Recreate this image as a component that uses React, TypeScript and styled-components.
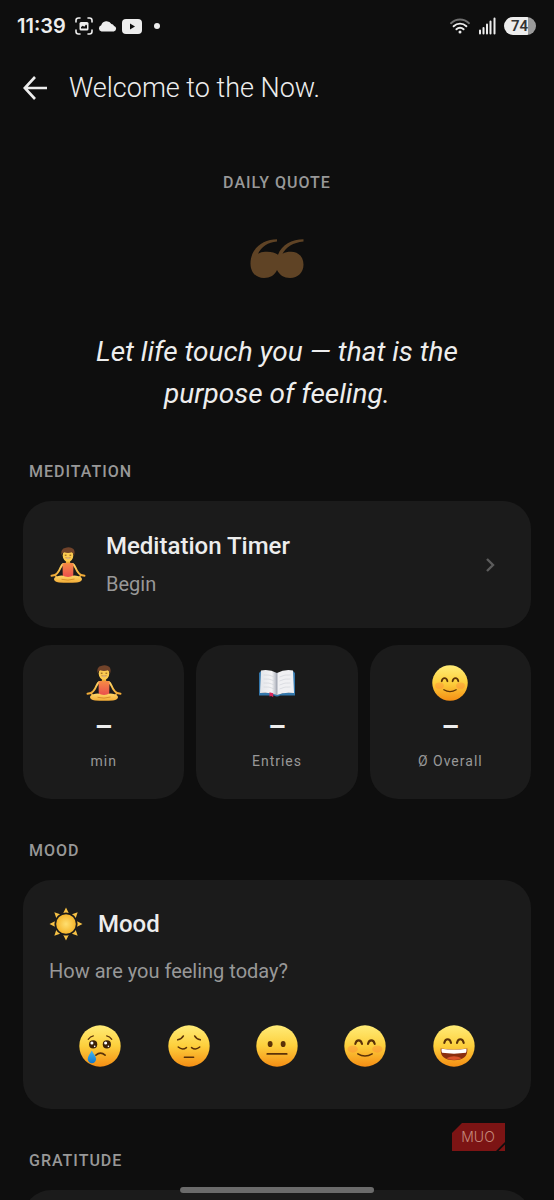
import React from "react";
import styled, { createGlobalStyle } from "styled-components";

const GlobalStyle = createGlobalStyle`
  *, *::before, *::after { box-sizing: border-box; }
  html, body { margin: 0; background: #0e0e0e; }
  body { font-family: Roboto, "Liberation Sans", sans-serif; color: #ededed; }
  h1, h2, h3, p { margin: 0; }
  button { font: inherit; color: inherit; background: none; border: 0; padding: 0; letter-spacing: inherit; cursor: pointer; }
  svg { display: block; flex: none; }
`;

const Screen = styled.div`
  position: relative;
  display: flex;
  flex-direction: column;
  height: 100vh;
  overflow: hidden;
  background: #0e0e0e;
`;

const StatusBar = styled.div`
  flex: none;
  display: flex;
  align-items: center;
  justify-content: space-between;
  height: 52px;
  padding: 0 18px 0 17px;
`;

const StatusGroup = styled.div<{ $gap: number }>`
  display: flex;
  align-items: center;
  gap: ${(p) => p.$gap}px;
`;

const Clock = styled.time`
  font: 600 20px/24px Inter, Roboto, sans-serif;
  margin-right: 4px;
`;

const Dot = styled.span`
  width: 6px;
  height: 6px;
  margin-left: 7px;
  border-radius: 50%;
  background: #ededed;
`;

const Battery = styled.span`
  display: flex;
  align-items: center;
  justify-content: center;
  width: 32px;
  height: 18px;
  padding-right: 1px;
  border-radius: 9px;
  background: linear-gradient(90deg, #ededed 76%, #9a9a9a 76%);
  color: #333;
  font: 600 15px/18px Roboto, sans-serif;
`;

const Header = styled.header`
  flex: none;
  display: flex;
  align-items: center;
  gap: 22px;
  height: 72px;
  padding: 0 23px;
`;

const Title = styled.h1`
  font-size: 27px;
  font-weight: 300;
  line-height: 36px;
`;

const Main = styled.main`
  flex: 1;
  min-height: 0;
  overflow-y: auto;
  scrollbar-width: none;
  padding: 48px 23px 0;
`;

const Label = styled.h2`
  font-size: 16px;
  font-weight: 500;
  line-height: 22px;
  letter-spacing: 1px;
  color: #989898;
`;

const Quote = styled.section`
  display: flex;
  flex-direction: column;
  align-items: center;
  text-align: center;
`;

const QuoteText = styled.p`
  margin-top: 52px;
  max-width: 400px;
  font-size: 28px;
  font-style: italic;
  line-height: 42px;
`;

const Section = styled.section<{ $top: number }>`
  display: flex;
  flex-direction: column;
  margin-top: ${(p) => p.$top}px;

  > ${Label} { margin: 0 6px 18px; }
`;

const Card = styled.div`
  border-radius: 28px;
  background: #1b1b1b;
`;

const TimerCard = styled(Card).attrs({ as: "button", type: "button" })`
  display: flex;
  align-items: center;
  gap: 20px;
  min-height: 127px;
  padding: 0 36px 0 27px;
  text-align: left;
`;

const TimerText = styled.span`
  flex: 1;
  display: flex;
  flex-direction: column;
  gap: 8px;
  padding-bottom: 2px;
`;

const CardTitle = styled.span`
  font-size: 24px;
  font-weight: 500;
  line-height: 32px;
`;

const CardText = styled.span`
  font-size: 20px;
  line-height: 28px;
  color: #989898;
`;

const Stats = styled.div`
  display: grid;
  grid-template-columns: repeat(3, 1fr);
  gap: 12px;
  margin-top: 17px;
`;

const StatCard = styled(Card)`
  display: flex;
  flex-direction: column;
  align-items: center;
  padding: 20px 8px 28px;
`;

const StatValue = styled.span`
  margin-top: 9px;
  font-size: 28px;
  font-weight: 700;
  line-height: 34px;
`;

const StatLabel = styled.span`
  margin-top: 7px;
  font-size: 14px;
  line-height: 20px;
  letter-spacing: 1px;
  color: #989898;
`;

const MoodCard = styled(Card)`
  display: flex;
  flex-direction: column;
  padding: 27px 26px 42px;
`;

const MoodHead = styled.div`
  display: flex;
  align-items: center;
  gap: 15px;
  margin-bottom: 16px;
`;

const Moods = styled.div`
  display: grid;
  grid-template-columns: repeat(5, 1fr);
  margin-top: 40px;
  padding: 0 7px;
`;

const MoodButton = styled.button`
  display: flex;
  justify-content: center;
`;

const GratitudeCard = styled(Card)`
  min-height: 160px;
`;

const Watermark = styled.div`
  position: absolute;
  right: 49px;
  bottom: 49px;
`;

const HomeBar = styled.div`
  position: absolute;
  bottom: 7px;
  left: 50%;
  width: 35%;
  height: 6px;
  border-radius: 3px;
  background: #6b6b6b;
  transform: translateX(-50%);
`;

const Defs = styled.svg`
  position: absolute;
`;

const QuoteIcon = styled.svg`
  margin-top: 45px;
`;

const Gradients = () => (
  <Defs width="0" height="0" aria-hidden="true">
    <defs>
      <linearGradient id="face" x1="0" y1="0" x2="0" y2="1">
        <stop offset="0" stopColor="#ffec78" />
        <stop offset="0.5" stopColor="#fdcf3c" />
        <stop offset="1" stopColor="#f58e14" />
      </linearGradient>
      <linearGradient id="shirt" x1="0" y1="0" x2="0" y2="1">
        <stop offset="0" stopColor="#f78c45" />
        <stop offset="1" stopColor="#ea4f4d" />
      </linearGradient>
      <linearGradient id="skin" x1="0" y1="0" x2="0" y2="1">
        <stop offset="0" stopColor="#ffd667" />
        <stop offset="1" stopColor="#f2ab36" />
      </linearGradient>
      <linearGradient id="page" x1="0" y1="0" x2="1" y2="0">
        <stop offset="0" stopColor="#e4e6ea" />
        <stop offset="0.7" stopColor="#f4f4f6" />
        <stop offset="1" stopColor="#a9adb8" />
      </linearGradient>
      <radialGradient id="sun">
        <stop offset="0" stopColor="#ffdf70" />
        <stop offset="1" stopColor="#f4b52c" />
      </radialGradient>
      <linearGradient id="tear" x1="0" y1="0" x2="0" y2="1">
        <stop offset="0" stopColor="#45b8f2" />
        <stop offset="1" stopColor="#1275c8" />
      </linearGradient>
    </defs>
  </Defs>
);

type Mood = "crying" | "pensive" | "neutral" | "smiling" | "laughing";

const Features = ({ mood }: { mood: Mood }) => {
  const ink = "#5b3208";
  switch (mood) {
    case "crying":
      return (
        <>
          <g fill="none" stroke={ink} strokeWidth="1.2" strokeLinecap="round">
            <path d="M9 14q2-3 5-3.400M32 14q-2-3-5-3.400" />
            <path d="M16.500 29.500q4.500-4 9 0" strokeWidth="1.600" />
          </g>
          <g fill="#3c2108"><circle cx="13.800" cy="19" r="4" /><circle cx="27.200" cy="19" r="4" /></g>
          <g fill="#fff"><circle cx="12.600" cy="17.600" r="1.500" /><circle cx="26" cy="17.600" r="1.500" /><circle cx="15.300" cy="20.800" r=".8" /><circle cx="28.700" cy="20.800" r=".8" /></g>
          <path d="M12.500 25c-1.500 3-4 5.500-4 8.300a4.100 4.100 0 0 0 8.200 0c0-2.800-3-5.300-4.200-8.300z" fill="url(#tear)" />
        </>
      );
    case "pensive":
      return (
        <g fill="none" stroke={ink} strokeWidth="1.500" strokeLinecap="round">
          <path d="M9.500 14.500q4-.8 5.500-3.800M31.500 14.500q-4-.8-5.500-3.800" />
          <path d="M10 21.500q4 3.500 8 .5M23 22q4 3 8-.5" />
          <path d="M16 31.500h9" />
        </g>
      );
    case "neutral":
      return (
        <>
          <g fill={ink}><ellipse cx="13.800" cy="18.500" rx="2.400" ry="3" /><ellipse cx="26.500" cy="18.500" rx="2.400" ry="3" /></g>
          <path d="M11 28.300h19" stroke={ink} strokeWidth="1.700" strokeLinecap="round" />
        </>
      );
    case "smiling":
      return (
        <>
          <g fill="#ff6f3d" opacity=".28"><ellipse cx="8.500" cy="23.500" rx="5" ry="3.500" /><ellipse cx="32.500" cy="23.500" rx="5" ry="3.500" /></g>
          <g fill="none" stroke={ink} strokeLinecap="round">
            <path d="M11 18.500q.8-3.500 3.300-3.500t3.300 3.500M23.400 18.500q.8-3.500 3.300-3.500t3.300 3.500" strokeWidth="2" />
            <path d="M13.500 28.200q7 4.300 14 0" strokeWidth="1.500" />
          </g>
        </>
      );
    case "laughing":
      return (
        <>
          <path d="M11 17.500q.8-3.500 3.300-3.500t3.300 3.500M23.400 17.500q.8-3.500 3.300-3.500t3.300 3.500" fill="none" stroke={ink} strokeWidth="2" strokeLinecap="round" />
          <path d="M7.500 23q13 2.200 26 0q.8 11.500-13 11.500T7.500 23z" fill="#8a2f10" />
          <path d="M8.300 23.200q12.200 2 24.400 0q.3 2.200-.5 4q-11.700 1.600-23.400 0q-.8-1.800-.5-4z" fill="#fff" />
          <path d="M13 32.500q7.500-3.800 15 0q-2.800 1.700-7.500 1.700T13 32.500z" fill="#d9542c" />
        </>
      );
  }
};

const Face = ({ mood, size = 42 }: { mood: Mood; size?: number }) => (
  <svg width={size} height={size} viewBox="0 0 41 41" aria-hidden="true">
    <circle cx="20.500" cy="20.500" r="20.200" fill="url(#face)" />
    <Features mood={mood} />
  </svg>
);

const Meditator = () => (
  <svg width="36" height="36" viewBox="0 0 36 36" aria-hidden="true">
    <path d="M13.300 17C11 18 10.500 21.500 8.500 24.500Q7 27 5 28L1.500 28.800M22.700 17C25 18 25.500 21.500 27.500 24.500Q29 27 31 28L34.500 28.800" fill="none" stroke="url(#skin)" strokeWidth="2" strokeLinecap="round" />
    <path d="M5 27.800l1.500 2.400M31 27.800l-1.500 2.400" stroke="#f2ab36" strokeWidth="1.500" strokeLinecap="round" />
    <path d="M16 12h4v4.500q-2 1.500-4 0z" fill="#eba832" />
    <path d="M12.500 16.800q2-1 3.500-1q2 1.500 4 0q1.500 0 3.500 1l-.3 13.200H12.800z" fill="url(#shirt)" />
    <path d="M9.500 28.800q3-.8 5.500.7q3 .9 6 0q2.500-1.500 5.500-.7q5 .7 5.500 3.200q0 3-5 3.400q-9 .8-18 0q-5-.4-5-3.400q.5-2.500 5.500-3.200z" fill="url(#skin)" />
    <path d="M11.500 32.300q6.500 1.800 13-.3" fill="none" stroke="#c97a1c" strokeWidth=".7" />
    <ellipse cx="18" cy="8.500" rx="5.300" ry="6.300" fill="#fccb50" />
    <path d="M11.500 8Q10.500 2 15 1q5-1.800 8.500 1Q25.500 5 24 8.500q-.6-2.500-2-3.300q-4 1.600-8 0q-1.700.8-2.500 2.800z" fill="#71432a" />
    <path d="M14.800 8.200h1.700M19.500 8.200h1.700" stroke="#603409" strokeWidth=".8" />
    <path d="M15.500 10.700q2.500 2.300 5 0z" fill="#fff" stroke="#a65a18" strokeWidth=".4" />
  </svg>
);

const Book = () => (
  <svg width="38" height="36" viewBox="0 0 38 36" aria-hidden="true">
    <path d="M1 8L3 6v22q8-1 16 1.500Q27 27 35 27.500V6l2 2V30.500H22q-3 2-6 0H1z" fill="#3478ad" />
    <path d="M3 5.500q8.500-1.500 16 2.500v22q-8-3.300-17-1.900z" fill="url(#page)" />
    <path d="M35 5.500q-8.500-1.500-16 2.500v22q8-3.300 17-1.900z" fill="#f0f0f3" />
    <path d="M19 8v22" stroke="#a2a7b3" strokeWidth="1" />
    <path d="M5.500 10q5.500-.8 11 2M5.500 14q5.500-.8 11 2M5.500 18q5.500-.8 11 2M5.500 22q5.500-.8 11 2M32.500 10q-5.500-.8-11 2M32.500 14q-5.500-.8-11 2M32.500 18q-5.500-.8-11 2M32.500 22q-5.500-.8-11 2" fill="none" stroke="#d2d5db" strokeWidth=".7" />
    <path d="M11.500 27.200l3.700 1v4l-2-1.200-1.700.6z" fill="#d9265c" />
  </svg>
);

const Sun = () => (
  <svg width="34" height="34" viewBox="0 0 34 34" aria-hidden="true">
    {[0, 45, 90, 135, 180, 225, 270, 315].map((angle) => (
      <path key={angle} d="M17 .5l2.700 5.400q-2.700-1-5.400 0z" fill="#f6c145" transform={`rotate(${angle} 17 17)`} />
    ))}
    <circle cx="17" cy="17" r="9.800" fill="url(#sun)" />
  </svg>
);

const QuoteMark = () => (
  <QuoteIcon width="54" height="40" viewBox="0 0 54 40" aria-hidden="true">
    <path d="M27 .3C13 .3.500 9.500.500 24.500C.500 33.500 6 39 14 39C20 39 25 36 27 31C29.500 36 34 39 40 39C48 39 53.500 33.500 53.500 25.500C53.500 17.500 48 12.800 41 12.800C37.500 12.800 35 13.300 32.500 14.800C36 8 43 3.500 53.500 2.400V.3C42 .3 31.500 6 28 15.800C25 13.500 20 12.300 15 12.800C12.500 12.900 10 13.600 8 14.800C11.500 7.500 18 3.200 27 2.400z" fill="#5f4325" />
  </QuoteIcon>
);

const stats = [
  { icon: <Meditator />, label: "min" },
  { icon: <Book />, label: "Entries" },
  { icon: <Face mood="smiling" size={36} />, label: "Ø Overall" },
];

const moods: Mood[] = ["crying", "pensive", "neutral", "smiling", "laughing"];

export default function App() {
  return (
    <Screen>
      <GlobalStyle />
      <Gradients />
      <StatusBar>
        <StatusGroup $gap={5}>
          <Clock>11:39</Clock>
          <svg width="18" height="18" viewBox="0 0 18 18" aria-hidden="true">
            <path d="M1 5V3.500Q1 1 3.500 1H5M13 1h1.500Q17 1 17 3.500V5M17 13v1.500q0 2.500-2.500 2.500H13M5 17H3.500Q1 17 1 14.500V13" fill="none" stroke="#ededed" strokeWidth="1.600" strokeLinecap="round" />
            <rect x="4.500" y="5" width="9" height="8.500" rx="1.500" fill="#ededed" />
            <path d="M6 11.500V10l1.800-1.300 1.500 1L11 7.500l1 1v3z" fill="#0e0e0e" />
          </svg>
          <svg width="19" height="12" viewBox="0 0 19 12" aria-hidden="true">
            <path d="M3.500 11.500a3.200 3.200 0 0 1-.3-6.200 5.500 5.500 0 0 1 10.200-1.200 4 4 0 0 1 2.700 1.800 2.900 2.900 0 0 1-.3 5.600z" fill="#ededed" />
          </svg>
          <svg width="20" height="15" viewBox="0 0 20 15" aria-hidden="true">
            <rect width="20" height="15" rx="4" fill="#ededed" />
            <path d="M8 4.500l5 3-5 3z" fill="#0e0e0e" />
          </svg>
          <Dot />
        </StatusGroup>
        <StatusGroup $gap={8}>
          <svg width="20" height="16" viewBox="0 0 20 16" aria-hidden="true" fill="none" strokeWidth="1.900" strokeLinecap="round">
            <path d="M1 5.200Q5 1.500 10 1.500t9 3.700" stroke="#707070" />
            <path d="M3.600 8.300q2.800-2.700 6.400-2.700t6.400 2.700M6.400 11.300q1.600-1.500 3.600-1.500t3.600 1.500" stroke="#ededed" />
            <circle cx="10" cy="14" r="1.500" fill="#ededed" />
          </svg>
          <svg width="18" height="18" viewBox="0 0 18 18" aria-hidden="true" stroke="#ededed" strokeWidth="2" strokeLinecap="round">
            <path d="M2 16.500v-3M5.500 16.500V11M9 16.500V7.500M12.500 16.500v-12M16.500 16.500v-15" />
          </svg>
          <Battery>74</Battery>
        </StatusGroup>
      </StatusBar>

      <Header>
        <button type="button" aria-label="Back">
          <svg width="24" height="24" viewBox="0 0 24 24" aria-hidden="true" fill="none" stroke="#ededed" strokeWidth="2.600">
            <path d="M12 1L1.800 12 12 23M1.800 12H24" />
          </svg>
        </button>
        <Title>Welcome to the Now.</Title>
      </Header>

      <Main>
        <Quote>
          <Label>DAILY QUOTE</Label>
          <QuoteMark />
          <QuoteText>Let life touch you — that is the purpose of feeling.</QuoteText>
        </Quote>

        <Section $top={46}>
          <Label>MEDITATION</Label>
          <TimerCard>
            <Meditator />
            <TimerText>
              <CardTitle>Meditation Timer</CardTitle>
              <CardText>Begin</CardText>
            </TimerText>
            <svg width="10" height="14" viewBox="0 0 10 14" aria-hidden="true" fill="none" stroke="#5c5c5c" strokeWidth="2.400">
              <path d="M2 1l6 6-6 6" />
            </svg>
          </TimerCard>
          <Stats>
            {stats.map((stat) => (
              <StatCard key={stat.label}>
                {stat.icon}
                <StatValue>–</StatValue>
                <StatLabel>{stat.label}</StatLabel>
              </StatCard>
            ))}
          </Stats>
        </Section>

        <Section $top={41}>
          <Label>MOOD</Label>
          <MoodCard>
            <MoodHead>
              <Sun />
              <CardTitle as="h3">Mood</CardTitle>
            </MoodHead>
            <CardText as="p">How are you feeling today?</CardText>
            <Moods>
              {moods.map((mood) => (
                <MoodButton key={mood} type="button" aria-label={mood}>
                  <Face mood={mood} />
                </MoodButton>
              ))}
            </Moods>
          </MoodCard>
        </Section>

        <Section $top={41}>
          <Label>GRATITUDE</Label>
          <GratitudeCard />
        </Section>
      </Main>

      <Watermark>
        <svg width="53" height="28" viewBox="0 0 53 28" role="img" aria-label="MUO">
          <path d="M10 0h43v19l-9 9H0V10z" fill="#7c1414" />
          <path d="M53 21.500V28h-6.500z" fill="#7c1414" />
          <text x="26" y="19" textAnchor="middle" fontFamily="Inter, sans-serif" fontWeight="300" fontSize="14" fill="#c58a7c">MUO</text>
        </svg>
      </Watermark>
      <HomeBar />
    </Screen>
  );
}
